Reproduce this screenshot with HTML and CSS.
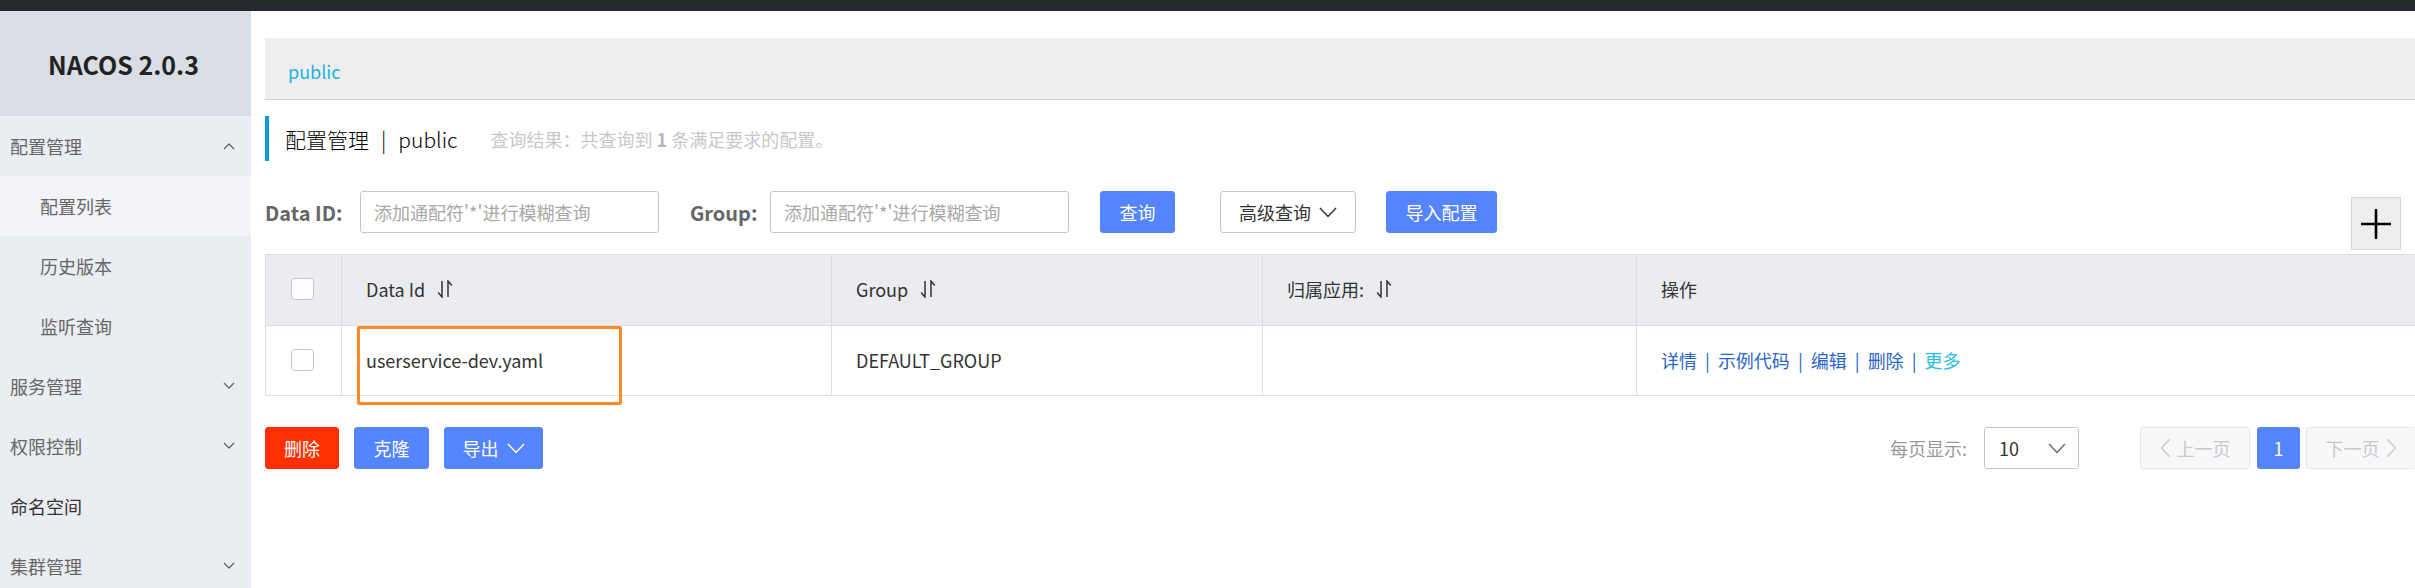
FILE: index.html
```html
<!DOCTYPE html>
<html lang="zh-CN">
<head>
<meta charset="utf-8">
<title>Nacos</title>
<link rel="stylesheet" href="styles.css">
</head>
<body>
<div class="topbar"></div>
<div class="layout">
  <aside class="sidebar">
    <div class="logo">NACOS 2.0.3</div>
    <div class="menu-item group">
      <span>配置管理</span>
      <svg class="chev" width="12" height="8" viewBox="0 0 12 8"><polyline points="1,7 6,2 11,7" fill="none" stroke="#666" stroke-width="1.3"/></svg>
    </div>
    <div class="menu-item sub active">配置列表</div>
    <div class="menu-item sub">历史版本</div>
    <div class="menu-item sub">监听查询</div>
    <div class="menu-item group">
      <span>服务管理</span>
      <svg class="chev" width="12" height="8" viewBox="0 0 12 8"><polyline points="1,1 6,6 11,1" fill="none" stroke="#666" stroke-width="1.3"/></svg>
    </div>
    <div class="menu-item group">
      <span>权限控制</span>
      <svg class="chev" width="12" height="8" viewBox="0 0 12 8"><polyline points="1,1 6,6 11,1" fill="none" stroke="#666" stroke-width="1.3"/></svg>
    </div>
    <div class="menu-item group dark">
      <span>命名空间</span>
    </div>
    <div class="menu-item group">
      <span>集群管理</span>
      <svg class="chev" width="12" height="8" viewBox="0 0 12 8"><polyline points="1,1 6,6 11,1" fill="none" stroke="#666" stroke-width="1.3"/></svg>
    </div>
  </aside>

  <main class="main">
    <div class="breadcrumb"><span class="ns">public</span></div>

    <div class="title">
      <span class="title-main">配置管理</span>
      <span class="title-sep">|</span>
      <span class="title-main">public</span>
      <span class="title-info">查询结果：共查询到 <b>1</b> 条满足要求的配置。</span>
    </div>

    <div class="search">
      <label class="s-label">Data ID:</label>
      <div class="s-input">添加通配符'*'进行模糊查询</div>
      <label class="s-label s-group">Group:</label>
      <div class="s-input">添加通配符'*'进行模糊查询</div>
      <button class="btn primary q-btn">查询</button>
      <button class="btn normal adv-btn">高级查询
        <svg width="18" height="11" viewBox="0 0 18 11"><polyline points="1,1 9,9.5 17,1" fill="none" stroke="#333" stroke-width="1.5"/></svg>
      </button>
      <button class="btn primary imp-btn">导入配置</button>
      <div class="plus">
        <svg width="32" height="32" viewBox="0 0 32 32"><path d="M16 1 V31 M1 16 H31" stroke="#000" stroke-width="2.6"/></svg>
      </div>
    </div>

    <div class="table-wrap">
      <div class="trow thead">
        <div class="cell c-check"><span class="checkbox"></span></div>
        <div class="cell c-id">Data Id
          <svg class="sort" width="16" height="18" viewBox="0 0 16 18"><path d="M5 1 V17 L1.2 12.5 M11 17 V1 L14.8 5.5" fill="none" stroke="#333" stroke-width="1.5"/></svg>
        </div>
        <div class="cell c-group">Group
          <svg class="sort" width="16" height="18" viewBox="0 0 16 18"><path d="M5 1 V17 L1.2 12.5 M11 17 V1 L14.8 5.5" fill="none" stroke="#333" stroke-width="1.5"/></svg>
        </div>
        <div class="cell c-app">归属应用:
          <svg class="sort" width="16" height="18" viewBox="0 0 16 18"><path d="M5 1 V17 L1.2 12.5 M11 17 V1 L14.8 5.5" fill="none" stroke="#333" stroke-width="1.5"/></svg>
        </div>
        <div class="cell c-op">操作</div>
      </div>
      <div class="trow tbody">
        <div class="cell c-check"><span class="checkbox"></span></div>
        <div class="cell c-id">userservice-dev.yaml</div>
        <div class="cell c-group">DEFAULT_GROUP</div>
        <div class="cell c-app"></div>
        <div class="cell c-op">
          <a class="link">详情</a><span class="sep">|</span><a class="link">示例代码</a><span class="sep">|</span><a class="link">编辑</a><span class="sep">|</span><a class="link">删除</a><span class="sep">|</span><a class="link more">更多</a>
        </div>
      </div>
      <div class="highlight"></div>
    </div>

    <div class="bottom">
      <div class="actions">
        <button class="btn danger">删除</button>
        <button class="btn primary b-clone">克隆</button>
        <button class="btn primary b-export">导出
          <svg width="18" height="11" viewBox="0 0 18 11"><polyline points="1,1 9,9.5 17,1" fill="none" stroke="#fff" stroke-width="1.5"/></svg>
        </button>
      </div>
      <div class="pager">
        <span class="pg-label">每页显示:</span>
        <div class="pg-select"><span>10</span>
          <svg width="18" height="11" viewBox="0 0 18 11"><polyline points="1,1 9,9.5 17,1" fill="none" stroke="#666" stroke-width="1.3"/></svg>
        </div>
        <div class="pg-btn pg-prev">
          <svg width="11" height="20" viewBox="0 0 11 20"><polyline points="10,1 1.5,10 10,19" fill="none" stroke="#ccc" stroke-width="1.5"/></svg>
          <span>上一页</span>
        </div>
        <div class="pg-num">1</div>
        <div class="pg-btn pg-next">
          <span>下一页</span>
          <svg width="11" height="20" viewBox="0 0 11 20"><polyline points="1,1 9.5,10 1,19" fill="none" stroke="#ccc" stroke-width="1.5"/></svg>
        </div>
      </div>
    </div>
  </main>
</div>
</body>
</html>
```
FILE: styles.css
```css
* { box-sizing: border-box; }
html, body {
  margin: 0;
  padding: 0;
  width: 2415px;
  height: 588px;
  overflow: hidden;
  background: #fff;
  font-family: "Noto Sans CJK SC", "Noto Sans", sans-serif;
  color: #333;
}
.topbar {
  height: 11px;
  background: #25292e;
}
.layout {
  display: flex;
  height: 577px;
}
.sidebar {
  flex: 0 0 251px;
  background: #eaedf1;
}
.logo {
  height: 105px;
  background: #d9dee5;
  display: flex;
  align-items: center;
  padding-left: 48px;
  font-weight: bold;
  font-size: 25px;
  color: #222;
}
.menu-item {
  height: 60px;
  display: flex;
  align-items: center;
  font-size: 18px;
  color: #666;
}
.menu-item.group {
  padding-left: 10px;
  padding-right: 16px;
  justify-content: space-between;
}
.menu-item.dark { color: #333; }
.menu-item.sub {
  padding-left: 40px;
}
.menu-item.active {
  background: #f2f3f7;
}
.chev { display: block; }

.main {
  flex: 0 0 2167px;
  padding: 27px 0 0 14px;
}
.breadcrumb {
  height: 62px;
  margin-right: -20px;
  background: #eeeeee;
  border-bottom: 1px solid #d0d0d0;
  display: flex;
  align-items: center;
  padding-left: 23px;
  padding-top: 4px;
}
.ns {
  color: #1fb2e0;
  font-size: 18px;
}
.title {
  margin-top: 16px;
  height: 45px;
  border-left: 4px solid #0a9bd0;
  display: flex;
  align-items: center;
  padding-left: 16px;
}
.title-main {
  font-size: 21px;
  font-weight: 300;
  color: #000;
}
.title-sep {
  font-size: 21px;
  font-weight: 300;
  color: #000;
  margin: 0 12px;
}
.title-info {
  margin-left: 33px;
  font-size: 18px;
  color: #c8c8c8;
}
.title-info b { color: #b8b8b8; }

.search {
  margin-top: 30px;
  display: flex;
  align-items: flex-start;
}
.s-label {
  height: 42px;
  display: flex;
  align-items: center;
  font-size: 20px;
  font-weight: bold;
  color: #666;
  width: 95px;
}
.s-label.s-group {
  margin-left: 31px;
  width: 80px;
}
.s-input {
  width: 299px;
  height: 42px;
  border: 1px solid #c4c6cf;
  border-radius: 3px;
  display: flex;
  align-items: center;
  padding-left: 13px;
  font-size: 18px;
  color: #a8a8a8;
  white-space: nowrap;
  overflow: hidden;
}
.btn {
  height: 42px;
  border-radius: 3px;
  border: 1px solid transparent;
  font-family: inherit;
  font-size: 18px;
  display: inline-flex;
  align-items: center;
  justify-content: center;
  padding: 0;
  gap: 8px;
}
.btn.primary { background: #5584ff; color: #fff; border-color: #5584ff; }
.btn.normal { background: #fff; color: #333; border-color: #c4c6cf; }
.btn.danger { background: #ff3000; color: #fff; border-color: #ff3000; }
.q-btn { width: 75px; margin-left: 31px; }
.adv-btn { width: 136px; margin-left: 45px; }
.imp-btn { width: 111px; margin-left: 30px; }
.plus {
  margin-left: auto;
  margin-right: 17px;
  margin-top: 6px;
  width: 50px;
  height: 53px;
  background: #eeeeee;
  border: 1px solid #d8d8d8;
  display: flex;
  align-items: center;
  justify-content: center;
}
.plus svg { display: block; }

.table-wrap {
  position: relative;
  margin-top: 4px;
  border-left: 1px solid #dcdee3;
}
.trow {
  display: flex;
  border-bottom: 1px solid #dcdee3;
}
.thead {
  height: 72px;
  background: #ebecf0;
  border-top: 1px solid #dcdee3;
}
.tbody { height: 70px; }
.cell {
  display: flex;
  align-items: center;
  font-size: 18px;
  color: #333;
  border-right: 1px solid #dcdee3;
  padding-left: 24px;
  white-space: nowrap;
}
.thead .cell { padding-bottom: 2px; }
.tbody .cell { padding-bottom: 2px; }
.c-check { flex: 0 0 76px; padding-left: 25px; }
.c-id { flex: 0 0 490px; }
.c-group { flex: 0 0 431px; }
.c-app { flex: 0 0 374px; }
.c-op { flex: 1 1 auto; border-right: none; }
.sort { margin-left: 12px; display: block; }
.checkbox {
  display: block;
  width: 23px;
  height: 22px;
  background: #fff;
  border: 1px solid #c4c6cf;
  border-radius: 4px;
}
.link { color: #2a66c5; }
.link.more { color: #2abde3; }
.sep { color: #2a66c5; margin: 0 8px; }
.highlight {
  position: absolute;
  left: 91px;
  top: 72px;
  width: 265px;
  height: 79px;
  border: 3px solid #ff8a2b;
  border-radius: 2px;
}

.bottom {
  margin-top: 31px;
  display: flex;
  justify-content: space-between;
  align-items: center;
}
.actions { display: flex; gap: 15px; }
.actions .btn.danger { width: 74px; }
.b-clone { width: 75px; }
.b-export { width: 99px; }
.pager {
  display: flex;
  align-items: center;
  margin-right: 2px;
}
.pg-label {
  font-size: 18px;
  color: #999;
  margin-right: 17px;
}
.pg-select {
  width: 95px;
  height: 42px;
  border: 1px solid #c4c6cf;
  border-radius: 3px;
  display: flex;
  align-items: center;
  justify-content: space-between;
  padding: 0 12px 0 14px;
  font-size: 18px;
  color: #333;
}
.pg-btn {
  width: 110px;
  height: 42px;
  background: #f7f8fa;
  border: 1px solid #e6e7eb;
  border-radius: 3px;
  display: flex;
  align-items: center;
  justify-content: center;
  gap: 6px;
  font-size: 18px;
  color: #c8c8c8;
}
.pg-prev { margin-left: 61px; }
.pg-num {
  width: 43px;
  height: 42px;
  margin: 0 6px 0 7px;
  background: #5584ff;
  border-radius: 3px;
  color: #fff;
  font-size: 18px;
  display: flex;
  align-items: center;
  justify-content: center;
}
```
